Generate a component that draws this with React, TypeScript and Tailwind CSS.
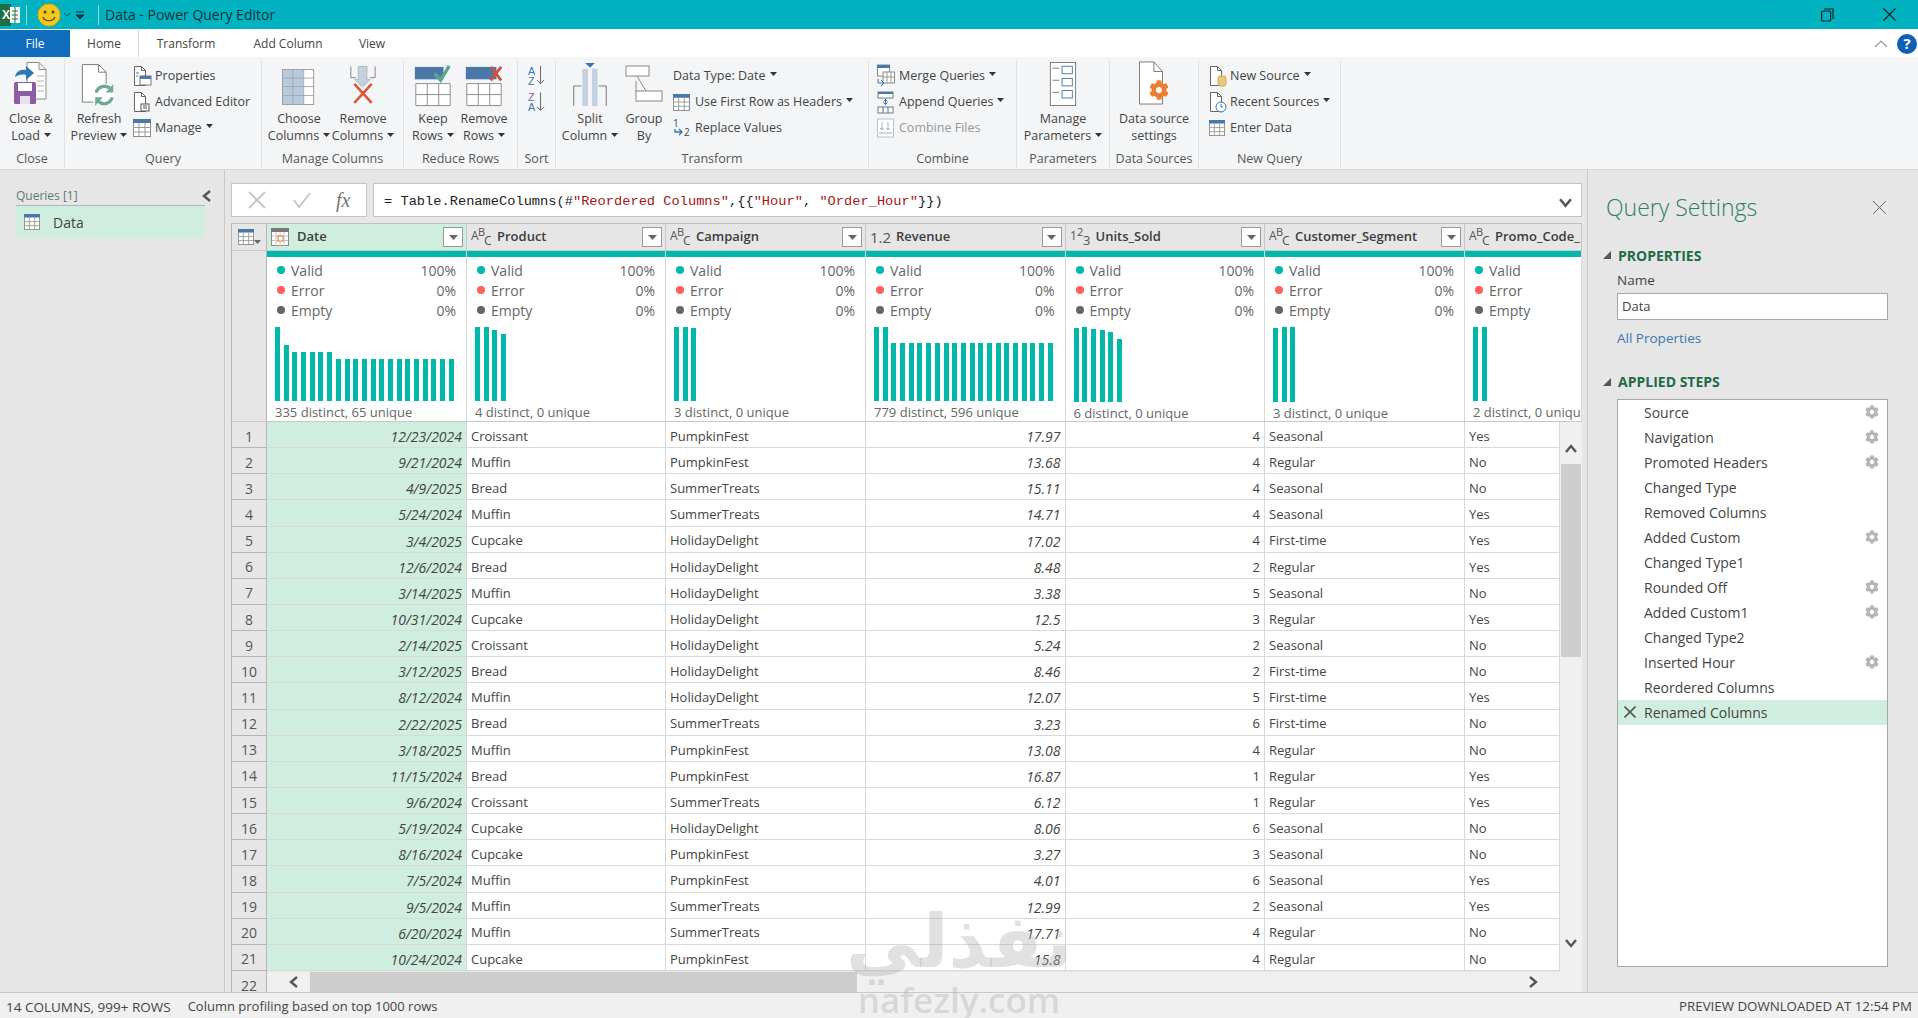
import { ReactNode } from "react";
import { FaCog } from "react-icons/fa";

const rows: [string, string, string, string, number, string, string][] = [
  ["12/23/2024", "Croissant", "PumpkinFest", "17.97", 4, "Seasonal", "Yes"],
  ["9/21/2024", "Muffin", "PumpkinFest", "13.68", 4, "Regular", "No"],
  ["4/9/2025", "Bread", "SummerTreats", "15.11", 4, "Seasonal", "No"],
  ["5/24/2024", "Muffin", "SummerTreats", "14.71", 4, "Seasonal", "Yes"],
  ["3/4/2025", "Cupcake", "HolidayDelight", "17.02", 4, "First-time", "Yes"],
  ["12/6/2024", "Bread", "HolidayDelight", "8.48", 2, "Regular", "Yes"],
  ["3/14/2025", "Muffin", "HolidayDelight", "3.38", 5, "Seasonal", "No"],
  ["10/31/2024", "Cupcake", "HolidayDelight", "12.5", 3, "Regular", "Yes"],
  ["2/14/2025", "Croissant", "HolidayDelight", "5.24", 2, "Seasonal", "No"],
  ["3/12/2025", "Bread", "HolidayDelight", "8.46", 2, "First-time", "No"],
  ["8/12/2024", "Muffin", "HolidayDelight", "12.07", 5, "First-time", "Yes"],
  ["2/22/2025", "Bread", "SummerTreats", "3.23", 6, "First-time", "No"],
  ["3/18/2025", "Muffin", "PumpkinFest", "13.08", 4, "Regular", "No"],
  ["11/15/2024", "Bread", "PumpkinFest", "16.87", 1, "Regular", "Yes"],
  ["9/6/2024", "Croissant", "SummerTreats", "6.12", 1, "Regular", "Yes"],
  ["5/19/2024", "Cupcake", "HolidayDelight", "8.06", 6, "Seasonal", "No"],
  ["8/16/2024", "Cupcake", "PumpkinFest", "3.27", 3, "Seasonal", "No"],
  ["7/5/2024", "Muffin", "PumpkinFest", "4.01", 6, "Seasonal", "Yes"],
  ["9/5/2024", "Muffin", "SummerTreats", "12.99", 2, "Seasonal", "Yes"],
  ["6/20/2024", "Muffin", "SummerTreats", "17.71", 4, "Regular", "No"],
  ["10/24/2024", "Cupcake", "PumpkinFest", "15.8", 4, "Regular", "No"],
];

const columns = [
  { name: "Date", type: "date", stat: "335 distinct, 65 unique", bars: [74, 56, 49, 49, 49, 49, 49, 42, 42, 42, 42, 42, 42, 42, 42, 42, 42, 42, 42, 42, 42] },
  { name: "Product", type: "abc", stat: "4 distinct, 0 unique", bars: [74, 74, 71, 67] },
  { name: "Campaign", type: "abc", stat: "3 distinct, 0 unique", bars: [74, 74, 73] },
  { name: "Revenue", type: "dec", stat: "779 distinct, 596 unique", bars: [74, 74, 58, 58, 58, 58, 58, 58, 58, 58, 58, 58, 58, 58, 58, 58, 58, 58, 58, 58, 58] },
  { name: "Units_Sold", type: "int", stat: "6 distinct, 0 unique", bars: [74, 75, 73, 72, 70, 63] },
  { name: "Customer_Segment", type: "abc", stat: "3 distinct, 0 unique", bars: [74, 75, 75] },
  { name: "Promo_Code_", type: "abc", stat: "2 distinct, 0 unique", bars: [74, 74] },
];

const steps = [
  ["Source", true], ["Navigation", true], ["Promoted Headers", true], ["Changed Type", false],
  ["Removed Columns", false], ["Added Custom", true], ["Changed Type1", false], ["Rounded Off", true],
  ["Added Custom1", true], ["Changed Type2", false], ["Inserted Hour", true], ["Reordered Columns", false],
] as [string, boolean][];

const Caret = () => (
  <svg width="7" height="4" viewBox="0 0 7 4" className="inline-block ml-[4px] mb-[4px]">
    <path d="M0 0h7L3.5 4z" fill="#333" />
  </svg>
);

const Chevron = ({ dir, size = 14, color = "#555" }: { dir: "up" | "down" | "left" | "right"; size?: number; color?: string }) => {
  const d = { up: "M2 10 7 4l5 6", down: "M2 4l5 6 5-6", left: "M10 2 4 7l6 5", right: "M4 2l6 5-6 5" }[dir];
  return (
    <svg width={size} height={size} viewBox="0 0 14 14" fill="none">
      <path d={d} stroke={color} strokeWidth="2.4" />
    </svg>
  );
};

// little grid with the blue header, used all over the ribbon
const GridIcon = ({ size = 18 }: { size?: number }) => (
  <svg width={size} height={size} viewBox="0 0 18 18">
    <rect x="0.5" y="0.5" width="17" height="17" fill="#fff" stroke="#8a8a8a" />
    <rect x="0" y="0" width="18" height="4" fill="#4a78a8" />
    <path d="M6 4v14M12 4v14M0 8.5h18M0 13h18" stroke="#9a9a9a" />
  </svg>
);

const DocSmall = ({ children }: { children?: ReactNode }) => (
  <svg width="19" height="22" viewBox="0 0 19 22" fill="none">
    <path d="M1.5 1.5h7l4 4v15h-11z" fill="#fff" stroke="#666" />
    <path d="M8.5 1.5v4h4" stroke="#666" />
    {children}
  </svg>
);

const CloseLoadIcon = () => (
  <svg width="36" height="46" viewBox="0 0 36 46" fill="none">
    <path d="M14 1.5h12l7 7V38H14z" fill="#fff" stroke="#8a8a8a" />
    <path d="M26 1.5v7h7" stroke="#8a8a8a" />
    <path d="M24 15h7M24 20h7M24 25h7M24 30h7" stroke="#b0b0b0" />
    <path d="M2 16c1-6 6-8 11-7V5l8 7-8 7v-5c-4-1-8 0-11 2z" fill="#2f78b7" />
    <rect x="1" y="21" width="22" height="22" rx="1.5" fill="#8c5ba6" />
    <rect x="5" y="22" width="14" height="8" fill="#fff" />
    <rect x="7" y="35" width="10" height="8" fill="#e9dff0" />
  </svg>
);

const RefreshIcon = () => (
  <svg width="38" height="44" viewBox="0 0 40 46" fill="none">
    <path d="M2.5 1.5h17l8 8V41h-25z" fill="#fff" stroke="#777" />
    <path d="M19.5 1.5v8h8" stroke="#777" />
    <rect x="14" y="22" width="22" height="22" fill="#fff" />
    <path d="M17 31a9 9 0 0 1 15-4" stroke="#6fa998" strokeWidth="3.5" />
    <path d="M35 22v9h-8z" fill="#6fa998" />
    <path d="M34 36a9 9 0 0 1-15 4" stroke="#6fa998" strokeWidth="3.5" />
    <path d="M16 45v-9h8z" fill="#6fa998" />
  </svg>
);

const ChooseIcon = () => (
  <svg width="34" height="38" viewBox="0 0 36 40">
    <rect x="0.5" y="0.5" width="33" height="37" fill="#fff" stroke="#999" />
    <rect x="1" y="1" width="22" height="36" fill="#b9c9dc" />
    <path d="M11.5 1v36M23 1v36M1 9.5h33M1 18.5h33M1 28h33" stroke="#9fa9b3" />
  </svg>
);

const RemoveColIcon = () => (
  <svg width="26" height="43" viewBox="0 0 30 46" fill="none">
    <path d="M1 1v13h6M29 1v13h-6" stroke="#777" />
    <path d="M9.5 1h10v15h4l-9 9-9-9h4z" fill="#c3d1e0" stroke="#b3b3b3" />
    <path d="M5 21l20 22M25 21 5 43" stroke="#d9583a" strokeWidth="3" />
  </svg>
);

const RowsIcon = ({ x }: { x?: boolean }) => (
  <svg width="38" height="42" viewBox="0 0 38 44" fill="none">
    <rect x="0" y="2" width={x ? 32 : 30} height="13" fill="#4a78a8" />
    <path d="M1 19.5h36v23H1zM13 19.5v23M25 19.5v23M1 31h36" stroke="#8a8a8a" fill="#fff" />
    {x ? (
      <path d="M26 2l11 14M37 2 26 16" stroke="#c9553c" strokeWidth="3" />
    ) : (
      <path d="M21 9l6 7 9-15" stroke="#5da98e" strokeWidth="3.5" />
    )}
  </svg>
);

const SortIcon = () => (
  <svg width="18" height="48" viewBox="0 0 20 54" fill="none">
    <text x="0" y="11" fontSize="12" fill="#3a76b0" fontFamily="Liberation Sans">A</text>
    <text x="0" y="22" fontSize="12" fill="#3a76b0" fontFamily="Liberation Sans">Z</text>
    <path d="M14 1v20M10 17l4 4 4-4" stroke="#555" />
    <text x="0" y="41" fontSize="12" fill="#7a5ea8" fontFamily="Liberation Sans">Z</text>
    <text x="0" y="52" fontSize="12" fill="#3a76b0" fontFamily="Liberation Sans">A</text>
    <path d="M14 31v20M10 47l4 4 4-4" stroke="#555" />
  </svg>
);

const SplitIcon = () => (
  <svg width="36" height="44" viewBox="0 0 36 46" fill="none">
    <path d="M1 45V24h8M35 45V24h-8" stroke="#777" />
    <rect x="10" y="6" width="6" height="39" fill="#c3d1e0" />
    <rect x="20" y="6" width="6" height="39" fill="#c3d1e0" />
    <path d="M13 0h10l-5 5z" fill="#3a76b0" />
  </svg>
);

const GroupIcon = () => (
  <svg width="38" height="42" viewBox="0 0 38 42" fill="none">
    <rect x="1" y="1" width="23" height="10" fill="#fff" stroke="#888" />
    <rect x="11" y="26" width="26" height="10" fill="#fff" stroke="#888" />
    <path d="M12 11l9 15M11 26V16" stroke="#888" />
  </svg>
);

const ParamsIcon = () => (
  <svg width="28" height="46" viewBox="0 0 30 48" fill="none">
    <rect x="1.5" y="1" width="27" height="46" fill="#fff" stroke="#777" />
    <path d="M4 7h7M4 20h7M4 33h7" stroke="#777" />
    <rect x="14" y="5" width="11" height="8" stroke="#4a78a8" />
    <rect x="14" y="18" width="11" height="8" stroke="#4a78a8" />
    <rect x="14" y="31" width="11" height="8" stroke="#4a78a8" />
  </svg>
);

const SourceSettingsIcon = () => (
  <div className="relative w-[32px] h-[46px]">
    <svg width="26" height="44" viewBox="0 0 26 46" fill="none">
      <path d="M1 1h15l9 10v34H1z" fill="#fff" stroke="#777" />
      <path d="M16 1v10h9" stroke="#777" />
    </svg>
    <FaCog size={20} color="#ed7d31" className="absolute left-[11px] top-[19px]" />
  </div>
);

const BigBtn = ({ icon, lines, caret, w }: { icon: ReactNode; lines: string[]; caret?: boolean; w: string }) => (
  <div className={`flex flex-col items-center ${w}`}>
    <div className="h-[50px] flex items-end justify-center pb-[3px]">{icon}</div>
    <div className="text-center leading-[17px] whitespace-nowrap">
      {lines.map((l, i) => (
        <div key={l}>
          {l}
          {caret && i === lines.length - 1 && <Caret />}
        </div>
      ))}
    </div>
  </div>
);

const SmallBtn = ({ icon, label, caret, disabled, pad = "w-[22px]" }: { icon?: ReactNode; label: string; caret?: boolean; disabled?: boolean; pad?: string }) => (
  <div className={`flex items-center h-[26px] whitespace-nowrap ${disabled ? "text-[#999]" : ""}`}>
    {icon && <div className={`${pad} shrink-0`}>{icon}</div>}
    {label}
    {caret && <Caret />}
  </div>
);

const Group = ({ label, w, children, className = "" }: { label: string; w: string; children: ReactNode; className?: string }) => (
  <div className={`flex flex-col h-full border-r border-[#dfe2e4] shrink-0 ${w}`}>
    <div className={`flex h-[91px] ${className}`}>{children}</div>
    <div className="flex-1 flex items-center justify-center pt-[1px] text-[#555] whitespace-nowrap">{label}</div>
  </div>
);

const Ribbon = () => (
  <div className="flex h-[113px] bg-[#f3f5f6] pt-[3px] border-b border-[#d6d6d6] text-[12.5px] text-[#444] shrink-0">
    <Group label="Close" w="w-[65px]">
      <BigBtn w="w-[62px]" icon={<CloseLoadIcon />} lines={["Close &", "Load"]} caret />
    </Group>
    <Group label="Query" w="w-[197px]">
      <BigBtn w="w-[68px]" icon={<RefreshIcon />} lines={["Refresh", "Preview"]} caret />
      <div className="pt-[3px]">
        <SmallBtn
          icon={
            <DocSmall>
              <rect x="7" y="11" width="11" height="9" fill="#fff" stroke="#777" />
              <rect x="7" y="11" width="11" height="3" fill="#4a78a8" />
              <path d="M3 8h3M3 11h2" stroke="#4a78a8" />
            </DocSmall>
          }
          label="Properties"
        />
        <SmallBtn
          icon={
            <DocSmall>
              <rect x="8" y="13" width="8" height="7" fill="#fff" stroke="#555" />
              <path d="M10 15h4M10 17h4" stroke="#555" />
            </DocSmall>
          }
          label="Advanced Editor"
        />
        <SmallBtn icon={<GridIcon />} label="Manage" caret />
      </div>
    </Group>
    <Group label="Manage Columns" w="w-[142px]" className="pl-[3px]">
      <BigBtn w="w-[68px]" icon={<ChooseIcon />} lines={["Choose", "Columns"]} caret />
      <BigBtn w="w-[60px]" icon={<RemoveColIcon />} lines={["Remove", "Columns"]} caret />
    </Group>
    <Group label="Reduce Rows" w="w-[114px]">
      <BigBtn w="w-[58px]" icon={<RowsIcon />} lines={["Keep", "Rows"]} caret />
      <BigBtn w="w-[44px]" icon={<RowsIcon x />} lines={["Remove", "Rows"]} caret />
    </Group>
    <Group label="Sort" w="w-[38px]" className="justify-center pt-[5px]">
      <SortIcon />
    </Group>
    <Group label="Transform" w="w-[313px]">
      <BigBtn w="w-[68px]" icon={<SplitIcon />} lines={["Split", "Column"]} caret />
      <BigBtn w="w-[40px]" icon={<GroupIcon />} lines={["Group", "By"]} />
      <div className="pt-[3px] ml-[9px]">
        <SmallBtn label="Data Type: Date" caret />
        <SmallBtn icon={<GridIcon size={17} />} label="Use First Row as Headers" caret />
        <SmallBtn
          icon={
            <svg width="18" height="20" viewBox="0 0 18 20" fill="none">
              <text x="0" y="9" fontSize="10" fill="#444" fontFamily="Open Sans">1</text>
              <text x="11" y="18" fontSize="10" fill="#444" fontFamily="Open Sans">2</text>
              <path d="M2 11v3h7M6 11l3 3-3 3" stroke="#2f78b7" strokeWidth="1.3" />
            </svg>
          }
          label="Replace Values"
        />
      </div>
    </Group>
    <Group label="Combine" w="w-[148px]" className="pl-[8px]">
      <div className="pt-[3px]">
        <SmallBtn
          icon={
            <svg width="18" height="24" viewBox="0 0 18 24" fill="none">
              <rect x="0.5" y="1" width="12" height="11" fill="#fff" stroke="#888" />
              <rect x="0" y="1" width="13" height="3" fill="#4a78a8" />
              <rect x="6" y="8" width="11.5" height="11" fill="#fff" stroke="#888" />
              <path d="M10 8v11M14 8v11M6 13h12" stroke="#999" />
              <path d="M1 15v4h5M4 16l3 3-3 3" stroke="#2f78b7" />
            </svg>
          }
          label="Merge Queries"
          caret
        />
        <SmallBtn
          icon={
            <svg width="18" height="24" viewBox="0 0 18 24" fill="none">
              <rect x="1" y="2" width="15" height="6" fill="#fff" stroke="#777" />
              <rect x="1" y="2" width="15" height="2" fill="#4a78a8" />
              <rect x="1" y="17" width="15" height="6" fill="#fff" stroke="#777" />
              <path d="M6 17v6M11 17v6M8.5 9v6M6.5 11.5l2-2 2 2M6.5 12.5l2 2 2-2" stroke="#2f78b7" />
            </svg>
          }
          label="Append Queries"
          caret
        />
        <SmallBtn
          disabled
          icon={
            <svg width="18" height="24" viewBox="0 0 18 24" fill="none">
              <rect x="0.5" y="3" width="16" height="18" fill="#fff" stroke="#b5c2cf" />
              <path d="M5 6v8M3 12l2 2 2-2M11 6v8M9 12l2 2 2-2M2 17h13" stroke="#9fb0c0" />
            </svg>
          }
          label="Combine Files"
        />
      </div>
    </Group>
    <Group label="Parameters" w="w-[93px]" className="justify-center">
      <BigBtn w="w-[80px]" icon={<ParamsIcon />} lines={["Manage", "Parameters"]} caret />
    </Group>
    <Group label="Data Sources" w="w-[89px]" className="justify-center">
      <BigBtn w="w-[80px]" icon={<SourceSettingsIcon />} lines={["Data source", "settings"]} />
    </Group>
    <Group label="New Query" w="w-[142px]" className="pl-[10px]">
      <div className="pt-[3px]">
        <SmallBtn
          pad="w-[21px]"
          icon={
            <DocSmall>
              <rect x="9" y="11" width="8" height="10" rx="2" fill="#eac77e" stroke="#d2ab5c" />
            </DocSmall>
          }
          label="New Source"
          caret
        />
        <SmallBtn
          pad="w-[21px]"
          icon={
            <DocSmall>
              <circle cx="12" cy="16" r="5" fill="#fff" stroke="#2f78b7" />
              <path d="M12 13v3h2" stroke="#2f78b7" />
            </DocSmall>
          }
          label="Recent Sources"
          caret
        />
        <SmallBtn pad="w-[21px]" icon={<GridIcon size={16} />} label="Enter Data" />
      </div>
    </Group>
  </div>
);

const TitleBar = () => (
  <div className="flex items-center h-[29px] bg-[#01b2c1] shrink-0">
    <svg width="21" height="24" viewBox="0 0 21 24">
      <path d="M0 1h11v22H0z" fill="#1d6f42" />
      <rect x="10" y="4" width="10" height="16" fill="#fff" />
      <path d="M12 8h6M12 12h6M12 16h6M15 4v16" stroke="#1d6f42" />
      <text x="2" y="16" fontSize="12" fontWeight="700" fill="#fff" fontFamily="Liberation Sans">X</text>
    </svg>
    <div className="ml-[5px] w-px h-[20px] bg-[#8fd6dd]" />
    <svg width="26" height="26" viewBox="0 0 26 26" className="ml-[9px]">
      <circle cx="13" cy="13" r="11" fill="#f5c71a" stroke="#e0b000" />
      <circle cx="9" cy="10" r="1.5" fill="#444" />
      <circle cx="17" cy="10" r="1.5" fill="#444" />
      <path d="M7 15c2 5 10 5 12 0" fill="none" stroke="#444" strokeWidth="1.2" />
    </svg>
    <svg width="8" height="6" viewBox="0 0 8 6" className="ml-[1px]">
      <path d="M1 1l3 3 3-3" fill="none" stroke="#155" />
    </svg>
    <svg width="8" height="8" viewBox="0 0 8 8" className="ml-[5px]">
      <path d="M0 1h8M0 4h8L4 8z" stroke="#134" fill="#134" />
    </svg>
    <div className="ml-[14px] w-px h-[20px] bg-[#8fd6dd]" />
    <div className="ml-[6px] text-[14px] text-[#17333a]">Data - Power Query Editor</div>
    <div className="ml-auto flex items-center pr-[22px] gap-[49px]">
      <div className="w-[12px] h-px bg-[#1ca1ad]" />
      <svg width="13" height="14" viewBox="0 0 13 14" fill="none">
        <rect x="0.7" y="3" width="9" height="10" rx="1" stroke="#222" strokeWidth="1.2" />
        <path d="M3 1h9v10" stroke="#222" strokeWidth="1.2" />
      </svg>
      <svg width="13" height="13" viewBox="0 0 13 13">
        <path d="M0.5 0.5l12 12M12.5 0.5l-12 12" stroke="#222" strokeWidth="1.2" />
      </svg>
    </div>
  </div>
);

const Tabs = () => (
  <div className="flex items-center h-[28px] pt-[1px] bg-white text-[12px] text-[#444] shrink-0">
    <div className="w-[70px] h-full flex items-center justify-center bg-[#106ebe] text-white">File</div>
    <div className="w-[69px] h-full flex items-center justify-center border-r border-[#d6d6d6]">Home</div>
    <div className="w-[94px] text-center">Transform</div>
    <div className="w-[110px] text-center">Add Column</div>
    <div className="w-[58px] text-center">View</div>
    <div className="ml-auto flex items-center">
      <svg width="14" height="9" viewBox="0 0 14 9" fill="none">
        <path d="M1 8l6-6 6 6" stroke="#999" strokeWidth="1.2" />
      </svg>
      <div className="ml-[9px] mr-[1px] w-[20px] h-[20px] rounded-full bg-[#0f5fb5] text-white text-[15px] font-bold flex items-center justify-center">?</div>
    </div>
  </div>
);

const TypeIcon = ({ type }: { type: string }) => {
  if (type === "date") {
    return (
      <svg width="18" height="18" viewBox="0 0 18 18">
        <rect x="0.5" y="0.5" width="17" height="17" fill="#fff" stroke="#8a8a8a" />
        <rect x="0" y="0" width="18" height="4" fill="#777" />
        <path d="M1 8h16M1 12.5h16M5 4v14M9 4v14M13 4v14" stroke="#c4c4c4" />
        <rect x="7" y="8" width="5" height="5" fill="#fff" stroke="#e07b28" />
      </svg>
    );
  }
  if (type === "dec") {
    return (
      <svg width="22" height="18" viewBox="0 0 22 18">
        <text x="0" y="15" fontSize="15" fill="#555" fontFamily="Open Sans">1.2</text>
      </svg>
    );
  }
  const [a, b, c] = type === "int" ? ["1", "2", "3"] : ["A", "B", "C"];
  return (
    <svg width="20" height="20" viewBox="0 0 20 20">
      <text x="0" y="13" fontSize="12" fill="#555" fontFamily="Open Sans">{a}</text>
      <text x="7" y="9" fontSize="11" fill="#555" fontFamily="Open Sans">{b}</text>
      <text x="13" y="18" fontSize="13" fill="#555" fontFamily="Open Sans">{c}</text>
    </svg>
  );
};

const colW = ["w-[200px]", "w-[199px]", "w-[200px]", "w-[199.5px]", "w-[199.5px]", "w-[200px]", "flex-1 min-w-0"];

const HeaderCell = ({ col, i }: { col: (typeof columns)[number]; i: number }) => (
  <div className={`${colW[i]} h-full flex items-center pl-[4px] pr-[3px] overflow-hidden border-r border-[#c8c8c8] ${i === 0 ? "bg-[#cfeee0]" : "bg-[#e6e6e6]"}`}>
    <div className="w-[26px] shrink-0">
      <TypeIcon type={col.type} />
    </div>
    <div className="font-semibold text-[13px] text-[#3c3c3c] whitespace-nowrap">{col.name}</div>
    {i < 6 && (
      <div className="ml-auto shrink-0 w-[20px] h-[20px] bg-white border border-[#9a9a9a] flex items-center justify-center">
        <svg width="9" height="5" viewBox="0 0 9 5">
          <path d="M0 0h9L4.5 5z" fill="#666" />
        </svg>
      </div>
    )}
  </div>
);

const ProfileCell = ({ col, i }: { col: (typeof columns)[number]; i: number }) => (
  <div className={`${colW[i]} h-full flex flex-col overflow-hidden border-r border-[#d9d9d9] bg-white`}>
    <div className="h-[6px] bg-[#01b8aa] shrink-0" />
    <div className="pl-[8px] pr-[9px] pt-[3px] text-[14px] text-[#666]">
      {[
        ["Valid", "100%", "bg-[#01b8aa]"],
        ["Error", "0%", "bg-[#fd625e]"],
        ["Empty", "0%", "bg-[#666666]"],
      ].map(([l, p, c]) => (
        <div key={l} className="flex items-center h-[20px] whitespace-nowrap">
          <span className={`w-[8px] h-[8px] ml-[2px] rounded-full ${c}`} />
          <span className="ml-[6px]">{l}</span>
          {i < 6 && <span className="ml-auto pr-[1px]">{p}</span>}
        </div>
      ))}
    </div>
    <div className="flex items-end gap-[3.7px] h-[75px] mt-[7px] pl-[8px]">
      {col.bars.map((h, n) => (
        <div key={n} className="w-[5px] shrink-0 bg-[#01b8aa]" style={{ height: h }} />
      ))}
    </div>
    <div className="pl-[8px] mt-[2px] text-[13px] text-[#666] whitespace-nowrap">{col.stat}</div>
  </div>
);

const Cell = ({ i, children }: { i: number; children: ReactNode }) => {
  const align = i === 0 || i === 3 || i === 4 ? "justify-end pr-[4px]" : "pl-[4px]";
  const italic = i === 0 || i === 3 ? "italic text-[14px]" : "";
  return (
    <div className={`${colW[i]} h-full flex items-center pt-[4px] border-r border-[#d9d9d9] overflow-hidden whitespace-nowrap ${align} ${italic} ${i === 0 ? "bg-[#cfeee0]" : "bg-white"}`}>
      {children}
    </div>
  );
};

const DataTable = () => (
  <div className="flex-1 min-h-0 flex flex-col mt-[6px] border-t border-[#c0c0c0]">
    <div className="flex h-[27px] shrink-0 border-b border-[#c8c8c8]">
      <div className="w-[36px] shrink-0 flex items-center pl-[6px] border-x border-[#b5b5b5] bg-[#e6e6e6]">
        <GridIcon size={16} />
        <svg width="7" height="4" viewBox="0 0 7 4" className="mt-[10px]">
          <path d="M0 0h7L3.5 4z" fill="#666" />
        </svg>
      </div>
      <div className="flex-1 flex min-w-0">
        {columns.map((c, i) => (
          <HeaderCell key={c.name} col={c} i={i} />
        ))}
      </div>
    </div>
    <div className="flex h-[171px] shrink-0 border-b border-[#c8c8c8]">
      <div className="w-[36px] shrink-0 border-x border-[#b5b5b5] bg-[#e6e6e6]" />
      <div className="flex-1 flex min-w-0">
        {columns.map((c, i) => (
          <ProfileCell key={c.name} col={c} i={i} />
        ))}
      </div>
    </div>
    <div className="flex-1 min-h-0 flex">
      <div className="w-[36px] shrink-0 overflow-hidden border-x border-[#b5b5b5] bg-[#e6e6e6] text-[14px] text-[#555]">
        {[...rows, null].map((_, n) => (
          <div key={n} className="h-[26.15px] pt-[3px] flex items-center justify-center border-b border-[#b5b5b5]">{n + 1}</div>
        ))}
      </div>
      <div className="flex-1 min-w-0 flex flex-col">
        <div className="flex-1 min-h-0 overflow-hidden text-[13px] text-[#444]">
          {rows.map((r) => (
            <div key={r[0]} className="flex h-[26.15px] border-b border-[#d9d9d9]">
              {r.map((v, i) => (
                <Cell key={i} i={i}>{v}</Cell>
              ))}
            </div>
          ))}
        </div>
        <div className="h-[20px] shrink-0 flex items-center bg-[#f0f0f0]">
          <div className="w-[43px] flex justify-center pl-[10px]">
            <Chevron dir="left" />
          </div>
          <div className="w-[547px] h-full bg-[#cdcdcd]" />
          <div className="ml-auto w-[55px] pr-[20px] flex justify-end">
            <Chevron dir="right" />
          </div>
        </div>
      </div>
      <div className="w-[22px] shrink-0 bg-[#f0f0f0] flex flex-col items-center pt-[20px]">
        <Chevron dir="up" />
        <div className="w-[20px] h-[193px] mt-[8px] bg-[#cdcdcd]" />
        <div className="mt-auto mb-[42px]">
          <Chevron dir="down" />
        </div>
      </div>
    </div>
  </div>
);

const FormulaBar = () => (
  <div className="flex h-[34px] gap-[6px] shrink-0">
    <div className="w-[136px] bg-white border border-[#c4c4c4] flex items-center text-[#bbb]">
      <svg width="18" height="18" viewBox="0 0 18 18" className="ml-[16px]">
        <path d="M1 1l16 16M17 1 1 17" stroke="#c8c8c8" strokeWidth="2" />
      </svg>
      <svg width="18" height="16" viewBox="0 0 18 16" className="ml-[27px]">
        <path d="M1 8l5 7L17 1" fill="none" stroke="#c8c8c8" strokeWidth="2" />
      </svg>
      <span className="ml-[25px] font-['Liberation_Serif',serif] italic text-[20px] text-[#777]">fx</span>
    </div>
    <div className="flex-1 bg-white border border-[#c4c4c4] flex items-center pl-[10px] pr-[8px] pt-[4px] font-['Liberation_Mono',monospace] text-[13.7px] text-[#222] whitespace-pre">
      <span>= Table.RenameColumns(#</span>
      <span className="text-[#a31515]">"Reordered Columns"</span>
      <span>,{"{{"}</span>
      <span className="text-[#a31515]">"Hour"</span>
      <span>, </span>
      <span className="text-[#a31515]">"Order_Hour"</span>
      <span>{"}})"}</span>
      <div className="ml-auto">
        <Chevron dir="down" size={15} />
      </div>
    </div>
  </div>
);

const QueriesPanel = () => (
  <div className="w-[225px] shrink-0 border-r border-[#c8c8c8] pl-[16px] pr-[19px] pt-[16px]">
    <div className="flex items-center justify-between h-[20px] pt-[1px] border-b border-[#b5b5b5] text-[12px] text-[#5d7a70]">
      <span>Queries [1]</span>
      <div className="mr-[-9px]">
        <Chevron dir="left" />
      </div>
    </div>
    <div className="h-[32px] bg-[#cfeee0] flex items-center pl-[8px] text-[14px] text-[#444]">
      <GridIcon size={16} />
      <span className="ml-[13px]">Data</span>
    </div>
  </div>
);

const SettingsPanel = () => (
  <div className="w-[331px] shrink-0 border-l border-[#c8c8c8] bg-[#e6e6e6] pr-[30px] flex flex-col text-[#444]">
    <div className="flex items-center justify-between pl-[18px] pt-[16px] h-[58px] text-[#2c7f60]">
      <span className="text-[23px] font-light leading-none">Query Settings</span>
      <svg width="15" height="15" viewBox="0 0 15 15" className="mr-[1px]">
        <path d="M1 1l13 13M14 1 1 14" stroke="#666" />
      </svg>
    </div>
    <div className="pl-[15px] mt-[17px] flex items-center h-[20px]">
      <svg width="8" height="8" viewBox="0 0 8 8"><path d="M8 0v8H0z" fill="#555" /></svg>
      <span className="ml-[7px] text-[14px] font-bold text-[#1e6b49]">PROPERTIES</span>
    </div>
    <div className="pl-[29px] mt-[5px] text-[13.5px]">Name</div>
    <div className="ml-[29px] mt-[3px] h-[27px] bg-white border border-[#a6a6a6] flex items-center pl-[4px] text-[13px]">Data</div>
    <div className="pl-[29px] mt-[8px] text-[13.5px] text-[#3b77ab]">All Properties</div>
    <div className="pl-[15px] mt-[23px] flex items-center h-[20px]">
      <svg width="8" height="8" viewBox="0 0 8 8"><path d="M8 0v8H0z" fill="#555" /></svg>
      <span className="ml-[7px] text-[14px] font-bold text-[#1e6b49]">APPLIED STEPS</span>
    </div>
    <div className="ml-[29px] mt-[7px] h-[568px] bg-white border border-[#a6a6a6] text-[14px]">
      {steps.map(([s, gear]) => (
        <div key={s} className="flex items-center h-[25px] pl-[26px] pr-[8px]">
          <span>{s}</span>
          {gear && <FaCog size={14} color="#b5b5b5" className="ml-auto" />}
        </div>
      ))}
      <div className="flex items-center h-[25px] bg-[#cfeee0] pl-[6px]">
        <svg width="12" height="12" viewBox="0 0 12 12">
          <path d="M0.5 0.5l11 11M11.5 0.5l-11 11" stroke="#555" strokeWidth="1.6" />
        </svg>
        <span className="ml-[8px]">Renamed Columns</span>
      </div>
    </div>
  </div>
);

const Watermark = () => (
  <div className="absolute left-[853px] top-[901px] w-[212px] flex flex-col items-center text-[#a8a8a8]/35 pointer-events-none select-none">
    <div dir="rtl" className="font-['DejaVu_Sans',sans-serif] font-bold text-[74px] leading-[80px]">نفذلي</div>
    <div className="mt-[4px] font-['Open_Sans',sans-serif] font-semibold text-[35px] leading-[30px]">nafezly.com</div>
  </div>
);

export default function App() {
  return (
    <div className="relative w-[1918px] h-[1018px] overflow-hidden flex flex-col bg-[#e6e6e6] font-['Open_Sans',sans-serif]">
      <TitleBar />
      <Tabs />
      <Ribbon />
      <div className="flex-1 min-h-0 flex">
        <QueriesPanel />
        <div className="flex-1 min-w-0 flex flex-col pl-[6px] pr-[5px] pt-[13px]">
          <FormulaBar />
          <DataTable />
        </div>
        <SettingsPanel />
      </div>
      <div className="h-[26px] shrink-0 flex items-center px-[6px] pt-[3px] bg-[#f0f0f0] border-t border-[#c8c8c8] text-[13px] text-[#444]">
        <span className="text-[13.5px]">14 COLUMNS, 999+ ROWS</span>
        <span className="ml-[17px]">Column profiling based on top 1000 rows</span>
        <span className="ml-auto text-[13.3px]">PREVIEW DOWNLOADED AT 12:54 PM</span>
      </div>
      <Watermark />
    </div>
  );
}
